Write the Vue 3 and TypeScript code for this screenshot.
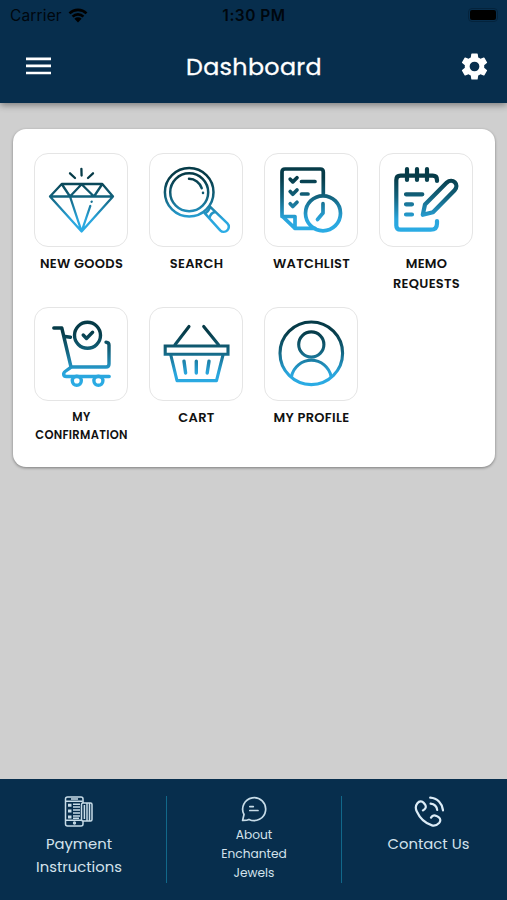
<script setup lang="ts">
interface Tile {
  icon: string
  lines: string[]
  compact?: boolean
}

const tiles: Tile[] = [
  { icon: 'diamond', lines: ['NEW GOODS'] },
  { icon: 'search', lines: ['SEARCH'] },
  { icon: 'watchlist', lines: ['WATCHLIST'] },
  { icon: 'memo', lines: ['MEMO', 'REQUESTS'] },
  { icon: 'confirmation', lines: ['MY', 'CONFIRMATION'], compact: true },
  { icon: 'cart', lines: ['CART'] },
  { icon: 'profile', lines: ['MY PROFILE'] },
]
</script>

<template>
  <div class="screen">
    <header class="header">
      <div class="status">
        <div class="carrier">
          <span>Carrier</span>
          <svg class="wifi" viewBox="0 0 20 15">
            <path d="M1.5 5.4a12.2 12.2 0 0 1 17 0M4.6 8.6a7.8 7.8 0 0 1 10.8 0" fill="none" stroke="#000" stroke-width="2.7" />
            <path d="M6.4 10.7a5.2 5.2 0 0 1 7.2 0L10 14.4z" />
          </svg>
        </div>
        <span class="clock">1:30 PM</span>
        <div class="battery"><i></i></div>
      </div>
      <div class="bar">
        <svg class="menu" viewBox="0 0 25 18">
          <path d="M0 1.8h25M0 8.9h25M0 16h25" stroke="#fff" stroke-width="2.7" />
        </svg>
        <h1>Dashboard</h1>
        <svg class="gear" viewBox="2 2 20 20">
          <path fill="#fff" d="M19.14 12.94c.04-.3.06-.61.06-.94 0-.32-.02-.64-.07-.94l2.03-1.58a.49.49 0 0 0 .12-.61l-1.92-3.32a.49.49 0 0 0-.59-.22l-2.39.96c-.5-.38-1.03-.7-1.62-.94l-.36-2.54a.48.48 0 0 0-.48-.41h-3.84c-.24 0-.43.17-.47.41l-.36 2.54c-.59.24-1.13.57-1.62.94l-2.39-.96a.48.48 0 0 0-.59.22L2.74 8.87c-.12.21-.08.47.12.61l2.03 1.58c-.05.3-.09.63-.09.94s.02.64.07.94l-2.03 1.58a.49.49 0 0 0-.12.61l1.92 3.32c.12.22.37.29.59.22l2.39-.96c.5.38 1.03.7 1.62.94l.36 2.54c.05.24.24.41.48.41h3.84c.24 0 .44-.17.47-.41l.36-2.54c.59-.24 1.13-.56 1.62-.94l2.39.96c.22.08.47 0 .59-.22l1.92-3.32a.48.48 0 0 0-.12-.61zM12 15.6a3.6 3.6 0 1 1 0-7.2 3.6 3.6 0 0 1 0 7.2z" />
        </svg>
      </div>
    </header>

    <main class="main">
      <section class="card">
        <div v-for="tile in tiles" :key="tile.icon" class="cell">
          <div class="tile">
            <svg class="icon" viewBox="0 0 94 94">
              <defs>
                <linearGradient :id="'ink-' + tile.icon" gradientUnits="userSpaceOnUse" x1="0" y1="15" x2="0" y2="79">
                  <stop offset="0.15" stop-color="#063b48" />
                  <stop offset="0.45" stop-color="#12627c" />
                  <stop offset="0.8" stop-color="#29a5dc" />
                  <stop offset="1" stop-color="#2bace5" />
                </linearGradient>
              </defs>
              <g :stroke="`url(#ink-${tile.icon})`" fill="none" stroke-linecap="round" stroke-linejoin="round">
                <g v-if="tile.icon === 'diamond'" stroke-width="2.3">
                  <path d="M27.7 31H68.3L79 43.5 47.6 78.5 16 43.5zM16 43.5H79.01M27.7 31L36 43.5 47.6 31.2 60 43.5 68.3 31M36 43.5L47.6 78.5 56.3 53M57.6 48.8l.1-.2" />
                  <path d="M47.4 15.8L47.6 22.5M36 20.3L41 25M59 20.3L54 25" />
                </g>
                <g v-else-if="tile.icon === 'search'" stroke-width="2.5">
                  <circle cx="40.2" cy="39.3" r="24.3" />
                  <circle cx="40.2" cy="39.3" r="19" />
                  <path d="M40 25.8a13.5 13.5 0 0 1 12.7 9.4M54 39.8v.2" />
                  <path d="M55.2 59.6L71.2 77.3a5 5 0 0 0 7.2-7L61 53.6M55.8 60.3c2-.8 4.5-4 5.3-6.2M60.5 65.2c.5-3.5 2.7-5.6 6-6.2" />
                </g>
                <g v-else-if="tile.icon === 'watchlist'" stroke-width="3.7">
                  <path d="M59.3 41V19q0-3-3-3H21q-3 0-3 3V63L31 75.4H51M18 63.5H31V75.4" />
                  <circle cx="59" cy="60.3" r="17.5" />
                  <path d="M59 50.7V60L53.5 66.5M37.5 28.5H51M37.5 41H44" />
                  <path d="M26.2 26.2l2.6 2.7 4.2-4.2M26.2 38.5l2.6 2.7 4.2-4.2M26.2 50.8l2.6 2.7 4.2-4.2" />
                </g>
                <g v-else-if="tile.icon === 'memo'" stroke-width="4.2">
                  <path d="M58 28V27q0-4.3-4.3-4.3H21.6q-4.3 0-4.3 4.3V72.4q0 4.3 4.3 4.3H51.7q6.3 0 6.3-6.3V68" />
                  <path d="M28 16V27M38 16V27M48 16V27M27 41.3H43.3M27 51.3H33M27 61.5H33" />
                  <path d="M43.8 61.8L46 51.5 67.8 29.6C73.5 24.3 80.8 31.7 75.6 37.2L54 59.2Z" />
                </g>
                <g v-else-if="tile.icon === 'confirmation'" stroke-width="3.4">
                  <path d="M19.8 21H27.8L37 60H72Q75 60 75 57V38Q75 35.4 72 35.2M31 29.5L36.5 30.3" />
                  <circle cx="53.5" cy="28.3" r="13" />
                  <path d="M49.2 28L52.5 31.5 58.6 25.3" />
                  <path d="M37 60C35 62.8 29.6 64 29.6 67Q29.6 69.5 32.5 69.5H75.2" />
                  <circle cx="42.8" cy="73.8" r="4.5" />
                  <circle cx="64.4" cy="73.8" r="4.5" />
                </g>
                <g v-else-if="tile.icon === 'cart'" stroke-width="3.1">
                  <path d="M40 19.5L26 37.8M54.7 19.5L69.5 37.8M21.8 48L28 73.6H67.5L74 48" />
                  <path d="M16.2 39H79V47.3H16.2z" stroke-linejoin="miter" />
                  <path d="M35 54.2L36.6 66M47.3 54.2V66M60 54.2L58.2 66" stroke-width="3.4" />
                </g>
                <g v-else stroke-width="3.1">
                  <circle cx="47.3" cy="46.3" r="31.3" />
                  <circle cx="47.3" cy="37.5" r="12.6" />
                  <path d="M27.5 69.5A20.2 20.2 0 0 1 67.1 69.5" />
                </g>
              </g>
            </svg>
          </div>
          <div class="label" :class="{ compact: tile.compact }">
            <span v-for="line in tile.lines" :key="line">{{ line }}</span>
          </div>
        </div>
      </section>
    </main>

    <footer class="footer">
      <div class="link payment">
        <svg viewBox="0 0 30 32" fill="none" stroke="#c7dce8" stroke-width="1.5">
          <rect x="1.5" y="1" width="17.5" height="29" rx="2" />
          <path d="M2 5.3H18.5M2 24.2H18.5M7 3H14" />
          <path d="M4 9.2H7.5M4 15H7.5M4 21H7.5" stroke-width="3" />
          <path d="M9 8.2H16M9 11H16M9 14H16M9 17H16M9 20H16M9 22.3H15" />
          <circle cx="10.5" cy="27" r=".9" />
          <rect x="17.5" y="7" width="10.5" height="18" rx="1.5" fill="#072e4d" />
          <path d="M20.4 9V23M23 7V25M25.5 7V25" />
        </svg>
        <span>Payment</span><span>Instructions</span>
      </div>
      <div class="link about">
        <svg viewBox="0 0 26 26" fill="none" stroke="#c7dce8" stroke-width="1.7" stroke-linecap="round" stroke-linejoin="round">
          <path d="M1.6 24.4L3 18.5A11.5 11.5 0 1 1 8 23.4C6 24.5 4 24.4 1.6 24.4z" />
          <path d="M8.8 10.6H12.3M8.8 14.5H17" />
        </svg>
        <span>About</span><span>Enchanted</span><span>Jewels</span>
      </div>
      <div class="link contact">
        <svg viewBox="0 0 30 31" fill="none" stroke="#dcecf7" stroke-width="2.2" stroke-linecap="round" stroke-linejoin="round">
          <path d="M8.9 14.4C11.7 13.3 12.4 10.9 11.2 8.8L9.6 6.8C8 4.8 5.2 5 3.4 7.2 1.3 9.8 1.2 12 2.7 15.3 5.8 22.2 11 27.3 18 29.4 21 30.3 23 29.2 25.1 27 26.8 25.1 26.7 22.7 24.8 21.3L22.4 19.9C20.2 18.8 18.2 19.4 17 21.6" />
          <path d="M16.2 1.6C23.3 2 28.3 7.2 29 14.5M16.6 7.6C20.3 8 22.8 10.4 23.2 14" />
        </svg>
        <span>Contact Us</span>
      </div>
    </footer>
  </div>
</template>

<style>
body {
  margin: 0;
  background: #cfcfcf;
}
</style>

<style scoped>
.screen {
  width: 507px;
  height: 900px;
  display: flex;
  flex-direction: column;
  overflow: hidden;
  background: #cfcfcf;
  font-family: Poppins, Inter, "Open Sans", sans-serif;
}
.header {
  flex: none;
  height: 103px;
  background: #072e4d;
  box-shadow: 0 2px 7px rgba(0, 0, 0, 0.42);
  z-index: 1;
}
.status {
  height: 30px;
  padding: 0 9px 0 10px;
  display: grid;
  grid-template-columns: 1fr auto 1fr;
  align-items: center;
  box-sizing: border-box;
  font-family: Inter, sans-serif;
  font-size: 15.5px;
  color: #00070e;
}
.carrier {
  display: flex;
  align-items: center;
  gap: 6px;
  letter-spacing: 0.15px;
}
.wifi {
  width: 20px;
  height: 15px;
}
.clock {
  font-weight: 600;
  letter-spacing: 0.5px;
}
.battery {
  justify-self: end;
  width: 30px;
  height: 14px;
  padding: 1px;
  box-sizing: border-box;
  border-radius: 4px;
  border: 1px solid #04233c;
}
.battery i {
  display: block;
  height: 100%;
  border-radius: 2px;
  background: #000;
}
.bar {
  height: 72px;
  padding: 0 19px 0 26px;
  display: grid;
  grid-template-columns: 1fr auto 1fr;
  align-items: center;
}
.menu {
  width: 25px;
  height: 18px;
}
.gear {
  justify-self: end;
  width: 27px;
  height: 27px;
}
h1 {
  margin: 0 6px 0 0;
  padding-top: 1px;
  font-size: 23.8px;
  line-height: 36px;
  font-weight: 400;
  letter-spacing: 0.35px;
  color: #fff;
  -webkit-text-stroke: 0.3px #fff;
}
.main {
  flex: 1;
  padding: 26px 12px 0 13px;
}
.card {
  height: 338px;
  padding: 24px 10.5px 0;
  box-sizing: border-box;
  display: grid;
  grid-template-columns: repeat(4, 115px);
  grid-auto-rows: 154px;
  border-radius: 13px;
  background: #fff;
  box-shadow: 0 1px 3px rgba(0, 0, 0, 0.4);
}
.cell {
  display: flex;
  flex-direction: column;
  align-items: center;
}
.tile {
  width: 94px;
  height: 94px;
  box-sizing: border-box;
  border: 1px solid #e5e5e5;
  border-radius: 14px;
}
.icon {
  display: block;
  width: 94px;
  height: 94px;
  margin: -1px;
}
.label {
  display: flex;
  flex-direction: column;
  align-items: center;
  padding: 7px 0 0 1px;
  font-size: 13px;
  line-height: 20px;
  font-weight: 600;
  letter-spacing: 0.3px;
  color: #111;
  white-space: nowrap;
}
.label.compact {
  padding-top: 8px;
  font-size: 11.5px;
  line-height: 17.5px;
}
.footer {
  flex: none;
  height: 121px;
  padding: 17px 0;
  box-sizing: border-box;
  display: grid;
  grid-template-columns: 167px 175px 165px;
  background: #072e4d;
  color: #d3e2ec;
}
.link {
  display: flex;
  flex-direction: column;
  align-items: center;
  font-size: 14.8px;
  line-height: 23px;
}
.link + .link {
  border-left: 1px solid #11688a;
  margin-left: -1px;
}
.payment {
  padding-right: 9px;
}
.payment svg {
  width: 30px;
  height: 32px;
  margin-bottom: 4px;
}
.about {
  padding-right: 1px;
  font-size: 12.2px;
  line-height: 19px;
}
.about svg {
  width: 26px;
  height: 26px;
  margin-bottom: 3px;
}
.contact {
  padding-left: 8px;
}
.contact svg {
  width: 30px;
  height: 31px;
  margin-bottom: 5px;
}
</style>
